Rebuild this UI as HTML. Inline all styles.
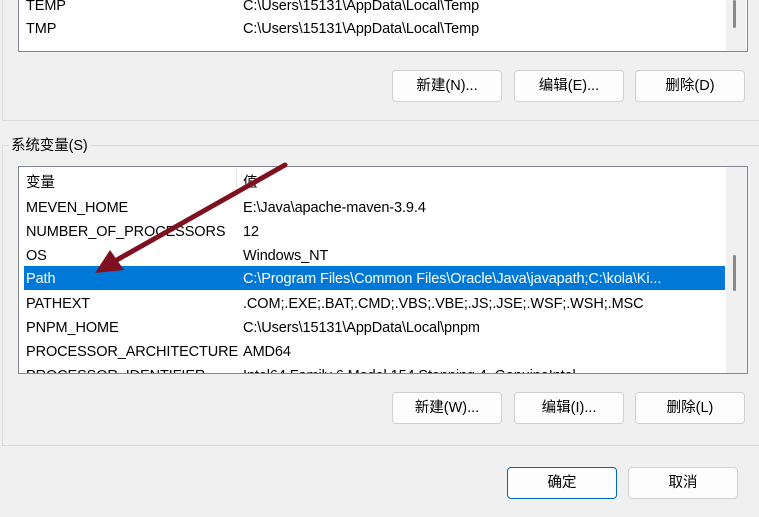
<!DOCTYPE html><html><head><style>
body{margin:0;width:759px;height:517px;background:#f0f0f0;position:relative;overflow:hidden;font-family:"Liberation Sans","Noto Sans CJK SC",sans-serif;font-size:14.5px;color:#000}
.a{position:absolute}
.lb{position:absolute;background:#fff;border:1px solid #828790;box-sizing:border-box}
.t{position:absolute;white-space:nowrap;line-height:24px;letter-spacing:-0.1px}
.btn{position:absolute;width:110px;height:32px;box-sizing:border-box;border:1px solid #d0d0d0;border-radius:4px;background:#fdfdfd;text-align:center;line-height:31px;font-size:14.5px}
.sb{position:absolute;background:#f0f0f0}
.th{position:absolute;width:3px;background:#8a8a8a;border-radius:2px}
</style></head><body>
<div class="a" style="left:2px;top:-2px;width:800px;height:123px;border:1px solid #dcdcdc;box-sizing:border-box"></div>
<div class="lb" style="left:18px;top:-2px;width:730px;height:54px;border-top:none"></div>
<div class="sb" style="left:726px;top:0;width:20px;height:51px"></div>
<div class="th" style="left:733px;top:0;height:28px"></div>
<div class="t" style="left:26px;top:-6px">TEMP</div><div class="t" style="left:243px;top:-6px">C:\Users\15131\AppData\Local\Temp</div>
<div class="t" style="left:26px;top:17px">TMP</div><div class="t" style="left:243px;top:17px">C:\Users\15131\AppData\Local\Temp</div>
<div class="btn" style="left:392px;top:70px">新建(N)...</div>
<div class="btn" style="left:514px;top:70px">编辑(E)...</div>
<div class="btn" style="left:635px;top:70px">删除(D)</div>

<div class="a" style="left:2px;top:145px;width:800px;height:301px;border:1px solid #dcdcdc;box-sizing:border-box"></div>
<div class="t" style="left:9px;top:134px;background:#f0f0f0;padding:0 2px">系统变量(S)</div>
<div class="lb" style="left:18px;top:166px;width:730px;height:208px;overflow:hidden">
<div class="a" style="left:217px;top:0;width:1px;height:26px;background:#e5e5e5"></div>
<div class="a" style="left:5px;top:99px;width:701px;height:24px;background:#0078d7"></div>
<div class="sb" style="left:707px;top:0;width:21px;height:206px"></div>
<div class="th" style="left:714px;top:88px;height:36px"></div>
<div class="t" style="left:7px;top:4px">变量</div><div class="t" style="left:224px;top:4px">值</div>
<div class="t" style="left:7px;top:29px">MEVEN_HOME</div><div class="t" style="left:224px;top:29px">E:\Java\apache-maven-3.9.4</div>
<div class="t" style="left:7px;top:53px">NUMBER_OF_PROCESSORS</div><div class="t" style="left:224px;top:53px">12</div>
<div class="t" style="left:7px;top:77px">OS</div><div class="t" style="left:224px;top:77px">Windows_NT</div>
<div class="t" style="left:7px;top:100px;color:#fff">Path</div><div class="t" style="left:224px;top:100px;color:#fff">C:\Program Files\Common Files\Oracle\Java\javapath;C:\kola\Ki...</div>
<div class="t" style="left:7px;top:125px">PATHEXT</div><div class="t" style="left:224px;top:125px">.COM;.EXE;.BAT;.CMD;.VBS;.VBE;.JS;.JSE;.WSF;.WSH;.MSC</div>
<div class="t" style="left:7px;top:149px">PNPM_HOME</div><div class="t" style="left:224px;top:149px">C:\Users\15131\AppData\Local\pnpm</div>
<div class="t" style="left:7px;top:173px">PROCESSOR_ARCHITECTURE</div><div class="t" style="left:224px;top:173px">AMD64</div>
<div class="t" style="left:7px;top:197px">PROCESSOR_IDENTIFIER</div><div class="t" style="left:224px;top:197px">Intel64 Family 6 Model 154 Stepping 4, GenuineIntel</div>
</div>
<div class="btn" style="left:392px;top:392px">新建(W)...</div>
<div class="btn" style="left:514px;top:392px">编辑(I)...</div>
<div class="btn" style="left:635px;top:392px">删除(L)</div>
<div class="btn" style="left:507px;top:467px;border:1px solid #0067c0">确定</div>
<div class="btn" style="left:628px;top:467px">取消</div>
<svg class="a" style="left:0;top:0" width="759" height="517"><line x1="285" y1="165" x2="115" y2="261" stroke="#7e1020" stroke-width="5" stroke-linecap="round"/><polygon points="95,273 110,250 124,270" fill="#7e1020"/></svg>
</body></html>
